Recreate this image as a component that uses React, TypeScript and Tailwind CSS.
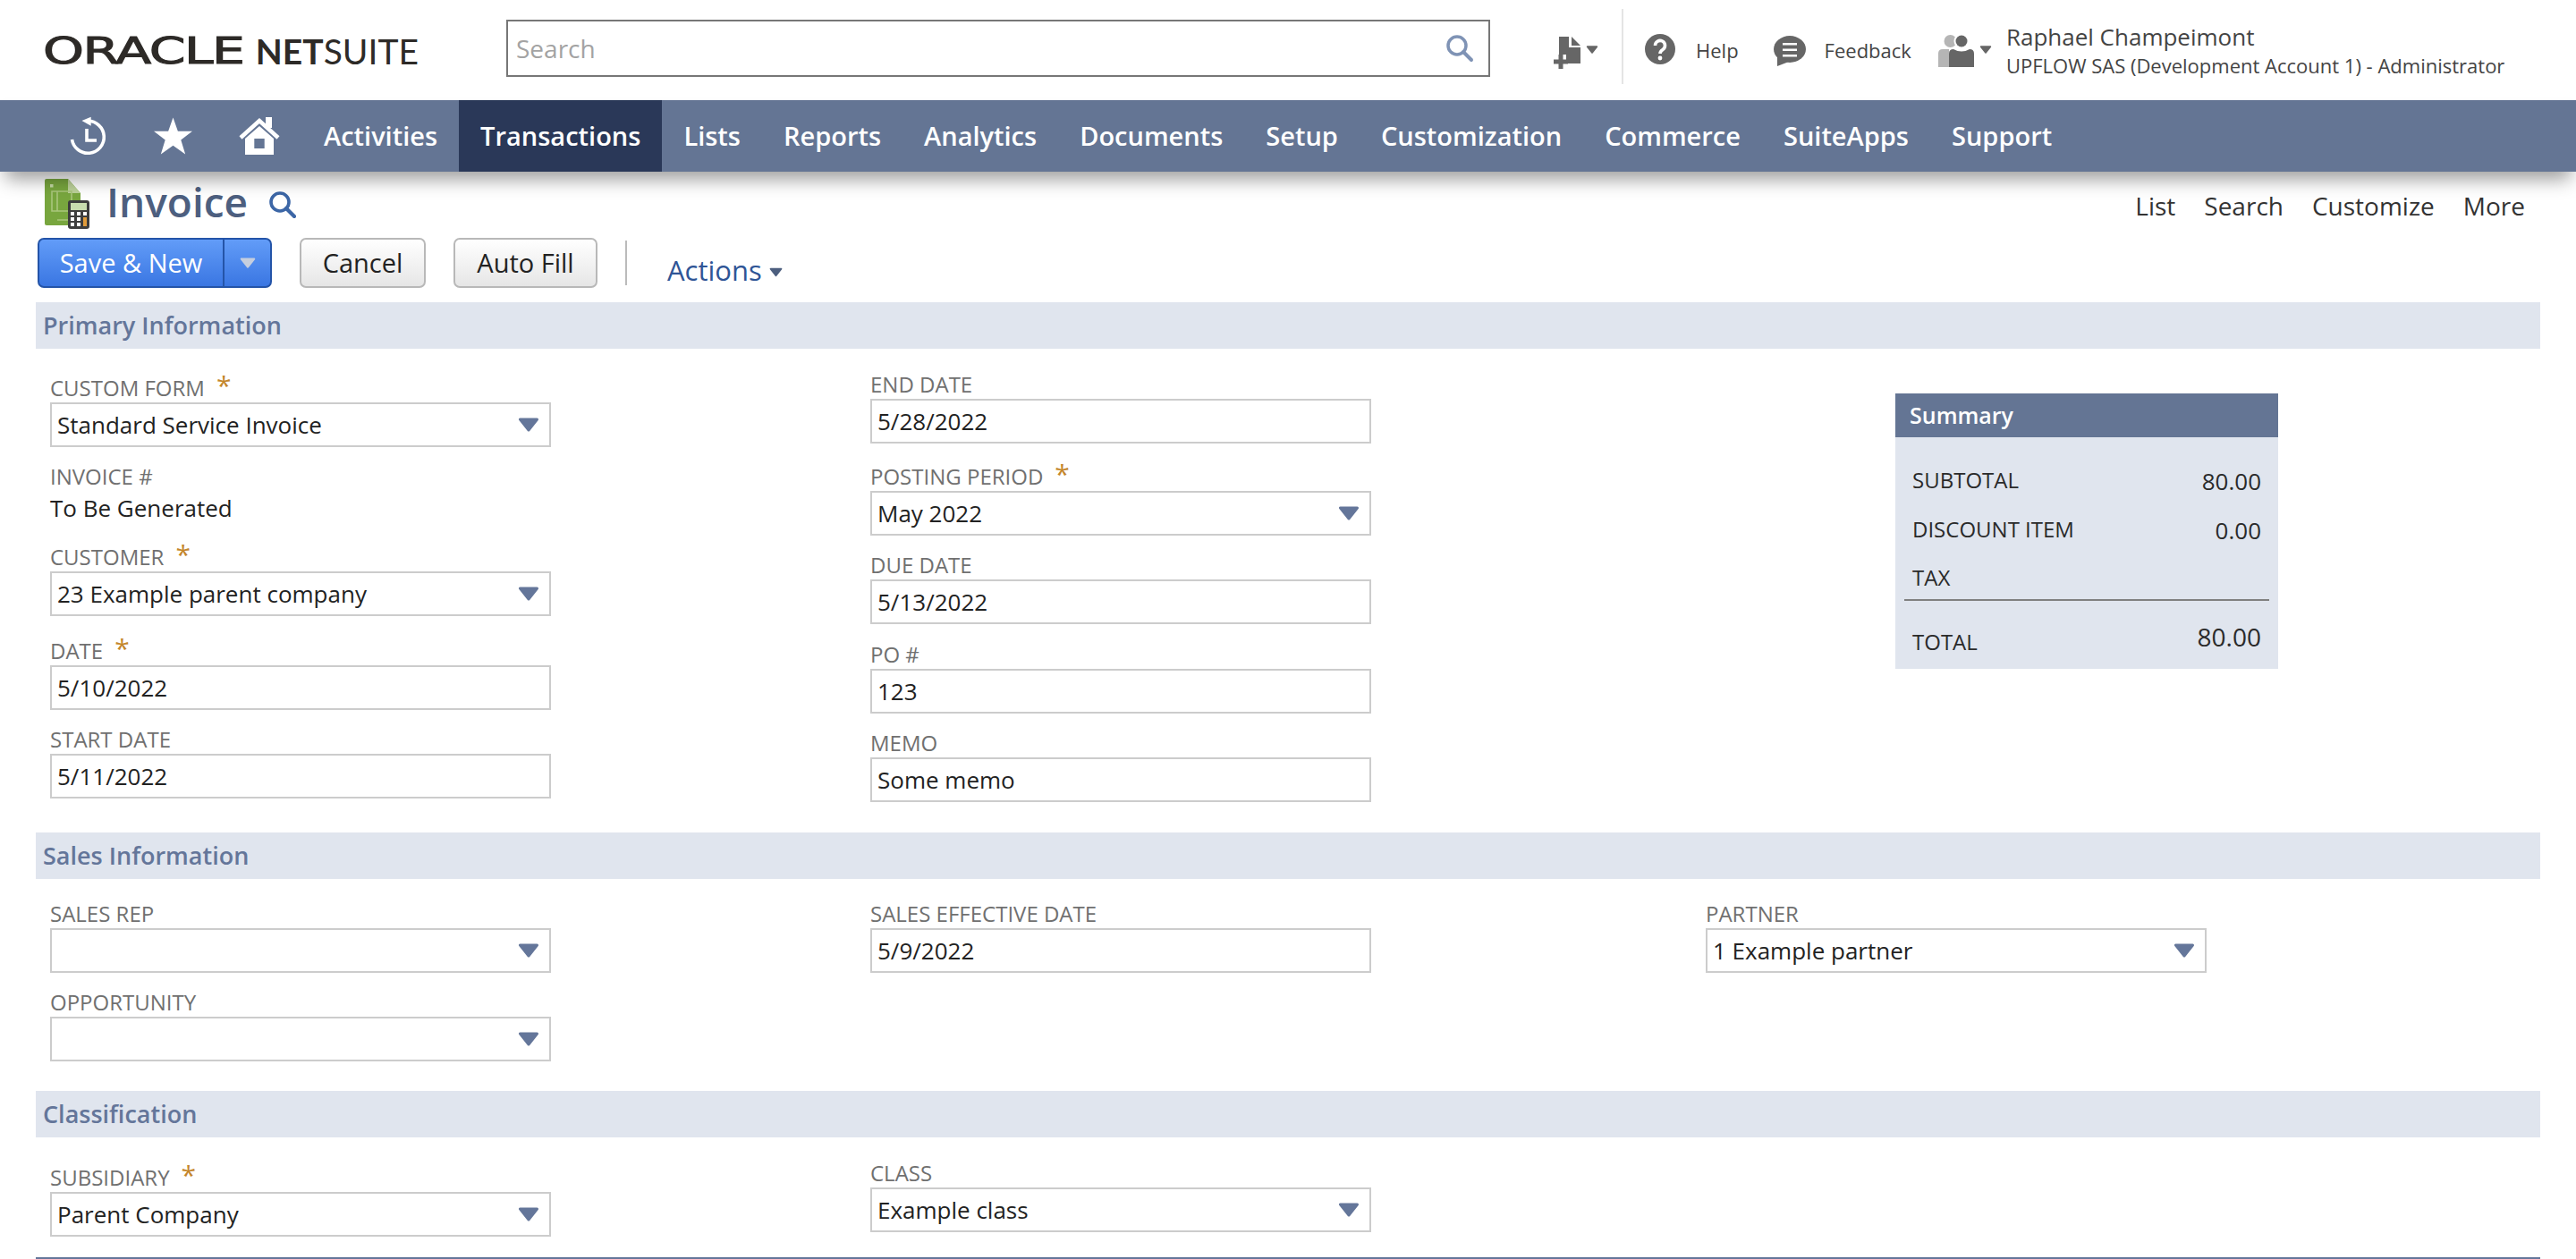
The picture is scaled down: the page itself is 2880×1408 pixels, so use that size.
import type { ReactNode } from 'react';

const navItems = ['Activities', 'Transactions', 'Lists', 'Reports', 'Analytics', 'Documents', 'Setup', 'Customization', 'Commerce', 'SuiteApps', 'Support'];

function Caret({ className }: { className: string }) {
    return (
        <svg viewBox="0 0 24 16" className={className}>
            <path d="M2.5 2 H21.5 L12 14 Z" fill="currentColor" stroke="currentColor" strokeWidth="3" strokeLinejoin="round" />
        </svg>
    );
}

function Label({ text, required, gap = 'ml-[13px]' }: { text: string; required?: boolean; gap?: string }) {
    return (
        <div className="flex h-[32px] items-center text-[24px] leading-[32px] text-[#707070]">
            {text}
            {required && <span className={`${gap} mt-[-6px] text-[30px] leading-[30px] text-[#c4862b]`}>*</span>}
        </div>
    );
}

function Field({ label, value, required, select, className = '' }: { label: string; value: string; required?: boolean; select?: boolean; className?: string }) {
    return (
        <div className={`w-[560px] ${className}`}>
            <Label text={label} required={required} />
            <div className="flex h-[50px] items-center justify-between border-2 border-[#cccccc] bg-white pl-[6px] pr-[11px] text-[26px] text-[#222222]">
                <span>{value}</span>
                {select && <Caret className="h-[16px] w-[24px] text-[#64769a]" />}
            </div>
        </div>
    );
}

function SectionBar({ title }: { title: string }) {
    return (
        <div className="flex h-[52px] items-center bg-[#e0e5ee] pl-[8px] text-[27px] font-semibold text-[#64769a]">{title}</div>
    );
}

function GrayButton({ children, className }: { children: ReactNode; className: string }) {
    return (
        <button className={`flex h-[56px] items-center justify-center rounded-[7px] border-2 border-[#b8b8b8] bg-gradient-to-b from-white to-[#e6e6e6] text-[29px] text-[#222222] ${className}`}>
            {children}
        </button>
    );
}

function SummaryRow({ label, value }: { label: string; value: string }) {
    return (
        <div className="flex h-[55px] items-center justify-between px-[9px]">
            <span className="text-[24px] text-[#2a2a2a]">{label}</span>
            <span className="mt-[3px] text-[26px] text-[#2a2a2a]">{value}</span>
        </div>
    );
}

function Logo() {
    return (
        <div className="ml-[48px] mt-[2px] flex w-[420px] items-center text-[#2d2a27]">
            <span className="inline-block w-[242px] origin-left scale-x-[1.46] font-['DejaVu_Sans',sans-serif] text-[40px] leading-[40px] tracking-[-1px] [-webkit-text-stroke:1px_#2d2a27]">ORACLE</span>
            <span className="font-['Lato',sans-serif] text-[39px] leading-[40px]">
                <span className="font-bold">NET</span>SUITE
            </span>
        </div>
    );
}

export default function App() {
    return (
        <div className="relative h-[1408px] w-[2880px] overflow-hidden bg-white font-['Open_Sans',sans-serif]">
            {/* top bar */}
            <div className="flex h-[112px] items-center">
                <Logo />
                <div className="ml-[98px] mt-[-4px] flex h-[64px] w-[1100px] items-center justify-between border-2 border-[#777777] pl-[9px] pr-[16px] text-[28px] text-[#a3a3a3]">
                    <span>Search</span>
                    <svg viewBox="0 0 32 32" className="h-[32px] w-[32px]">
                        <circle cx="13" cy="13" r="10" fill="none" stroke="#7f93b5" strokeWidth="3.5" />
                        <path d="M20 20 L29 29" stroke="#7f93b5" strokeWidth="4" strokeLinecap="round" />
                    </svg>
                </div>
                <svg viewBox="0 0 30 36" className="ml-[71px] mt-[6px] h-[36px] w-[30px]">
                    <path d="M6 0 H17 V12 H30 V30 H14 V20 H6 Z" fill="#666666" />
                    <path d="M20 0 L30 10 H20 Z" fill="#666666" />
                    <path d="M0 28 H16 M8 20 V36" stroke="#666666" strokeWidth="5" />
                </svg>
                <Caret className="ml-[6px] mt-[-2px] h-[9px] w-[14px] text-[#666666]" />
                <div className="ml-[26px] mt-[-8px] h-[84px] w-[2px] bg-[#e4e4e4]" />
                <svg viewBox="0 0 34 34" className="ml-[24px] mt-[-2px] h-[34px] w-[34px]">
                    <circle cx="17" cy="17" r="17" fill="#666666" />
                    <path d="M11.5 13 a5.5 5.5 0 1 1 8.5 4.5 c-2 1.3 -3 2 -3 4.5" fill="none" stroke="#ffffff" strokeWidth="3.6" />
                    <circle cx="17" cy="27" r="2.4" fill="#ffffff" />
                </svg>
                <span className="ml-[23px] text-[22px] text-[#444444]">Help</span>
                <svg viewBox="0 0 36 34" className="ml-[39px] mt-[2px] h-[34px] w-[36px]">
                    <ellipse cx="18" cy="15" rx="18" ry="15" fill="#666666" />
                    <path d="M4 22 V34 L17 29 Z" fill="#666666" />
                    <path d="M10 9.3 H26 M10 15.7 H26 M10 22.3 H26" stroke="#ffffff" strokeWidth="2.6" />
                </svg>
                <span className="ml-[21px] text-[22px] text-[#444444]">Feedback</span>
                <svg viewBox="0 0 40 37" className="ml-[30px] h-[37px] w-[40px]">
                    <circle cx="13.5" cy="8" r="7" fill="#b5b5b5" />
                    <path d="M0 37 V22 Q0 17 5 17 H12 V37 Z" fill="#b5b5b5" />
                    <circle cx="26" cy="8" r="8.5" fill="#ffffff" />
                    <circle cx="26" cy="8" r="6.5" fill="#666666" />
                    <path d="M12 37 V22 Q12 17 17 17 Q26 22 35 17 Q40 17 40 22 V37 Z" fill="#666666" />
                </svg>
                <Caret className="ml-[6px] mt-[-2px] h-[9px] w-[14px] text-[#666666]" />
                <div className="ml-[16px] flex flex-col text-[#444444]">
                    <span className="text-[26px] leading-[34px]">Raphael Champeimont</span>
                    <span className="text-[22px] leading-[30px]">UPFLOW SAS (Development Account 1) - Administrator</span>
                </div>
            </div>

            {/* main menu */}
            <div className="relative z-10 flex h-[80px] items-center bg-[#647594] pl-[78px] text-white shadow-[0_14px_20px_-6px_rgba(0,0,0,0.4)]">
                <svg viewBox="0 0 40 42" className="h-[42px] w-[40px] overflow-visible">
                    <path d="M2.5 25 A18 18 0 1 0 20 4.3" fill="none" stroke="#ffffff" strokeWidth="3.6" />
                    <path d="M13.5 4 L23.7 -0.3 V9.7 Z" fill="#ffffff" />
                    <path d="M19 13 V26 H30" fill="none" stroke="#ffffff" strokeWidth="3.6" />
                </svg>
                <svg viewBox="0 0 44 42" className="ml-[54px] h-[42px] w-[43px]">
                    <polygon points="22,0 27.5,15.5 44,15.5 31,25.5 36,42 22,32 8,42 13,25.5 0,15.5 16.5,15.5" fill="#ffffff" />
                </svg>
                <svg viewBox="0 0 46 42" className="ml-[52px] h-[42px] w-[46px]">
                    <path d="M2 23 L23 4 L44 23" fill="none" stroke="#ffffff" strokeWidth="4.5" />
                    <rect x="30" y="0" width="7" height="12" fill="#ffffff" />
                    <path d="M23 10 L39 24 V42 H7 V24 Z M17.3 24 V35 H28.7 V24 Z" fill="#ffffff" fillRule="evenodd" />
                </svg>
                <div className="ml-[25px] flex h-full">
                    {navItems.map((item) => (
                        <div key={item} className={`flex h-full items-center px-[24px] text-[29px] font-semibold ${item === 'Transactions' ? 'bg-[#2a3858]' : ''}`}>
                            {item}
                        </div>
                    ))}
                </div>
            </div>

            {/* page title */}
            <div className="flex h-[74px] items-start justify-between pl-[50px] pr-[57px]">
                <div className="flex items-start">
                    <svg viewBox="0 0 50 56" className="mt-[8px] h-[56px] w-[50px]">
                        <path d="M2 0 H26 L40 16 V52 H2 Q0 52 0 50 V2 Q0 0 2 0 Z" fill="#78a63e" />
                        <path d="M26 0 L40 16 H26 Z" fill="#bcd19a" />
                        <rect x="6" y="6" width="3.5" height="3.5" fill="#c6dba6" />
                        <path d="M8 14 H30 V36 H8 Z M14 14 V36 M8 36 H26 M14 46 H26" fill="none" stroke="#a9c67c" strokeWidth="1.6" />
                        <rect x="26" y="24" width="24" height="32" rx="3" fill="#3d3d3d" />
                        <rect x="29" y="27" width="18" height="8" fill="#c8dcae" />
                        <g fill="#ffffff">
                            <rect x="29" y="37" width="4" height="4" /><rect x="36" y="37" width="4" height="4" />
                            <rect x="29" y="43" width="4" height="4" /><rect x="36" y="43" width="4" height="4" />
                            <rect x="29" y="49" width="4" height="4" /><rect x="36" y="49" width="4" height="4" />
                            <rect x="43" y="37" width="4" height="4" />
                        </g>
                        <rect x="43" y="43" width="4" height="10" fill="#e09b3a" />
                    </svg>
                    <h1 className="ml-[19px] mt-[3px] text-[46px] font-semibold leading-[60px] text-[#4d5f7f]">Invoice</h1>
                    <svg viewBox="0 0 30 30" className="ml-[24px] mt-[22px] h-[30px] w-[30px]">
                        <circle cx="12" cy="12" r="10" fill="none" stroke="#3c66a6" strokeWidth="3.6" />
                        <path d="M19 19 L28 28" stroke="#3c66a6" strokeWidth="4.2" strokeLinecap="round" />
                    </svg>
                </div>
                <div className="mt-[20px] flex gap-[32px] text-[28px] leading-[36px] text-[#333333]">
                    <span>List</span>
                    <span>Search</span>
                    <span>Customize</span>
                    <span>More</span>
                </div>
            </div>

            {/* action buttons */}
            <div className="flex h-[56px] items-center pl-[42px]">
                <div className="flex h-[56px] w-[262px] rounded-[7px] border-2 border-[#2454a8] bg-gradient-to-b from-[#629cf8] to-[#3a76e2] text-[29px] text-white">
                    <div className="flex w-[207px] items-center justify-center border-r-2 border-[#2454a8]">Save &amp; New</div>
                    <div className="flex flex-1 items-center justify-center">
                        <Caret className="h-[20px] w-[18px] text-[#c5cede]" />
                    </div>
                </div>
                <GrayButton className="ml-[31px] w-[141px]">Cancel</GrayButton>
                <GrayButton className="ml-[31px] w-[161px]">Auto Fill</GrayButton>
                <div className="ml-[31px] h-[50px] w-[2px] bg-[#bbbbbb]" />
                <div className="ml-[45px] mt-[16px] flex items-center text-[31px] text-[#2f5596]">
                    Actions
                    <Caret className="ml-[8px] mt-[4px] h-[11px] w-[15px] text-[#4d5f7f]" />
                </div>
            </div>

            <div className="mt-[16px] px-[40px]">
                <SectionBar title="Primary Information" />
                <div className="flex pb-[34px] pl-[16px]">
                    <div className="w-[917px]">
                        <Field className="mt-[28px]" label="CUSTOM FORM" value="Standard Service Invoice" required select />
                        <div className="mt-[17px]">
                            <Label text="INVOICE #" />
                            <div className="mt-[3px] text-[26px] leading-[32px] text-[#222222]">To Be Generated</div>
                        </div>
                        <Field className="mt-[23px]" label="CUSTOMER" value="23 Example parent company" required select />
                        <Field className="mt-[23px]" label="DATE" value="5/10/2022" required />
                        <Field className="mt-[17px]" label="START DATE" value="5/11/2022" />
                    </div>
                    <div className="w-[1146px]">
                        <Field className="mt-[24px]" label="END DATE" value="5/28/2022" />
                        <Field className="mt-[21px]" label="POSTING PERIOD" value="May 2022" required select />
                        <Field className="mt-[17px]" label="DUE DATE" value="5/13/2022" />
                        <Field className="mt-[18px]" label="PO #" value="123" />
                        <Field className="mt-[17px]" label="MEMO" value="Some memo" />
                    </div>
                    <div className="mt-[50px] h-[308px] w-[428px] bg-[#e0e5ee]">
                        <div className="flex h-[49px] items-center bg-[#647594] pl-[16px] text-[25px] font-semibold text-white">Summary</div>
                        <div className="px-[10px] pt-[20px]">
                            <SummaryRow label="SUBTOTAL" value="80.00" />
                            <SummaryRow label="DISCOUNT ITEM" value="0.00" />
                            <div className="flex h-[53px] items-center border-b-2 border-[#808080] px-[9px] pt-[2px] text-[24px] text-[#2a2a2a]">TAX</div>
                            <div className="flex justify-between px-[9px]">
                                <span className="mt-[28px] text-[24px] leading-[36px] text-[#2a2a2a]">TOTAL</span>
                                <span className="mt-[20px] text-[28px] leading-[40px] text-[#2a2a2a]">80.00</span>
                            </div>
                        </div>
                    </div>
                </div>

                <SectionBar title="Sales Information" />
                <div className="flex pb-[33px] pl-[16px]">
                    <div className="w-[917px]">
                        <Field className="mt-[23px]" label="SALES REP" value="" select />
                        <Field className="mt-[17px]" label="OPPORTUNITY" value="" select />
                    </div>
                    <div className="w-[934px]">
                        <Field className="mt-[23px]" label="SALES EFFECTIVE DATE" value="5/9/2022" />
                    </div>
                    <div>
                        <Field className="mt-[23px]" label="PARTNER" value="1 Example partner" select />
                    </div>
                </div>

                <SectionBar title="Classification" />
                <div className="flex h-[136px] border-b-2 border-[#64769a] pl-[16px]">
                    <div className="w-[917px]">
                        <Field className="mt-[29px]" label="SUBSIDIARY" value="Parent Company" required select />
                    </div>
                    <div>
                        <Field className="mt-[24px]" label="CLASS" value="Example class" select />
                    </div>
                </div>
            </div>
        </div>
    );
}
